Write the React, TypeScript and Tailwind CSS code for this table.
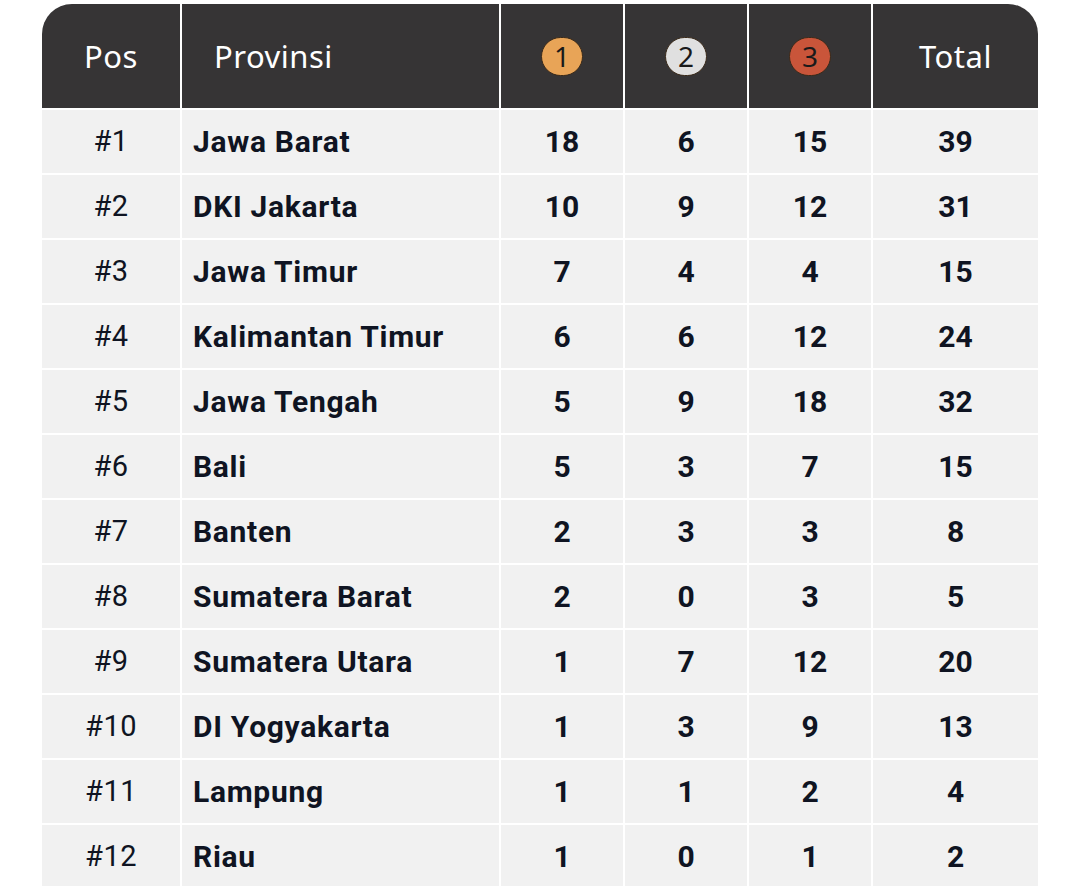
const rows = [
  { pos: 1, name: "Jawa Barat", g: 18, s: 6, b: 15, t: 39 },
  { pos: 2, name: "DKI Jakarta", g: 10, s: 9, b: 12, t: 31 },
  { pos: 3, name: "Jawa Timur", g: 7, s: 4, b: 4, t: 15 },
  { pos: 4, name: "Kalimantan Timur", g: 6, s: 6, b: 12, t: 24 },
  { pos: 5, name: "Jawa Tengah", g: 5, s: 9, b: 18, t: 32 },
  { pos: 6, name: "Bali", g: 5, s: 3, b: 7, t: 15 },
  { pos: 7, name: "Banten", g: 2, s: 3, b: 3, t: 8 },
  { pos: 8, name: "Sumatera Barat", g: 2, s: 0, b: 3, t: 5 },
  { pos: 9, name: "Sumatera Utara", g: 1, s: 7, b: 12, t: 20 },
  { pos: 10, name: "DI Yogyakarta", g: 1, s: 3, b: 9, t: 13 },
  { pos: 11, name: "Lampung", g: 1, s: 1, b: 2, t: 4 },
  { pos: 12, name: "Riau", g: 1, s: 0, b: 1, t: 2 },
];

function Medal({ n, color }: { n: number; color: string }) {
  return (
    <span
      className={`flex h-[39px] w-[42px] items-center justify-center rounded-full border border-[#3a2a1a] font-['Noto_Sans',sans-serif] text-[28px] font-normal leading-none text-[#1a1a1a] ${color}`}
    >
      {n}
    </span>
  );
}

export default function App() {
  const head = "flex items-center bg-[#363435] font-['Noto_Sans',sans-serif] text-[31px] text-white";
  const cell = "flex items-center justify-center bg-[#f1f1f1]";
  return (
    <div className="min-h-[886px] bg-white pl-[42px] pt-[4px] font-['Roboto',sans-serif]">
      <div className="grid w-[996px] grid-cols-[138px_317px_122px_122px_122px_165px] gap-[2px] overflow-hidden">
        <div className={`${head} h-[104px] justify-center rounded-tl-[30px] tracking-[0.5px]`}>Pos</div>
        <div className={`${head} pl-[32px] tracking-[0.5px]`}>Provinsi</div>
        <div className={`${head} justify-center`}>
          <Medal n={1} color="bg-[#e8a457]" />
        </div>
        <div className={`${head} justify-center`}>
          <Medal n={2} color="bg-[#e0e0e0]" />
        </div>
        <div className={`${head} justify-center`}>
          <Medal n={3} color="bg-[#c9553a]" />
        </div>
        <div className={`${head} justify-center rounded-tr-[30px] tracking-[0.5px]`}>Total</div>

        {rows.map((r) => (
          <div key={r.pos} className="contents text-[#0f1422]">
            <div className={`${cell} h-[63px] text-[29px] tracking-[0.5px]`}>#{r.pos}</div>
            <div className="flex items-center bg-[#f1f1f1] pl-[11px] text-[30px] font-bold tracking-[0.7px]">{r.name}</div>
            <div className={`${cell} text-[30px] font-bold`}>{r.g}</div>
            <div className={`${cell} text-[30px] font-bold`}>{r.s}</div>
            <div className={`${cell} text-[30px] font-bold`}>{r.b}</div>
            <div className={`${cell} text-[30px] font-bold`}>{r.t}</div>
          </div>
        ))}
      </div>
    </div>
  );
}
